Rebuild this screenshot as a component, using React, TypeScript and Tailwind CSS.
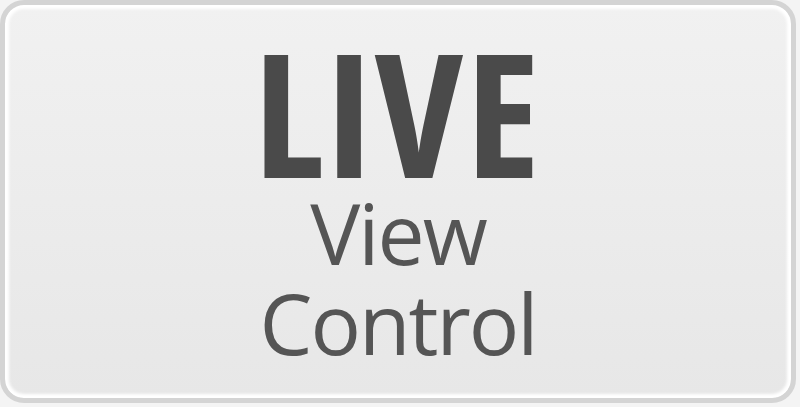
export default function App() {
  return (
    <div className="w-[800px] h-[407px] bg-[#f4f4f4] overflow-hidden">
      <div className="w-[796px] h-[403px] rounded-[24px] border-[5px] border-[#d4d4d4] bg-gradient-to-b from-[#f1f1f1] to-[#e7e7e7] shadow-[inset_0_0_3px_4px_#ffffff] flex flex-col items-center pt-[20px]">
        <div
          className="text-[#4a4a4a] font-bold leading-none text-[172px] tracking-[3px]"
          style={{ fontFamily: '"Open Sans", "Liberation Sans", sans-serif', fontStretch: '78%' }}
        >
          LIVE
        </div>
        <div
          className="text-[#555555] text-[84px] leading-[90px] tracking-[-2px] text-center -mt-[9px]"
          style={{ fontFamily: '"Open Sans", "Liberation Sans", sans-serif' }}
        >
          View
          <br />
          Control
        </div>
      </div>
    </div>
  )
}
